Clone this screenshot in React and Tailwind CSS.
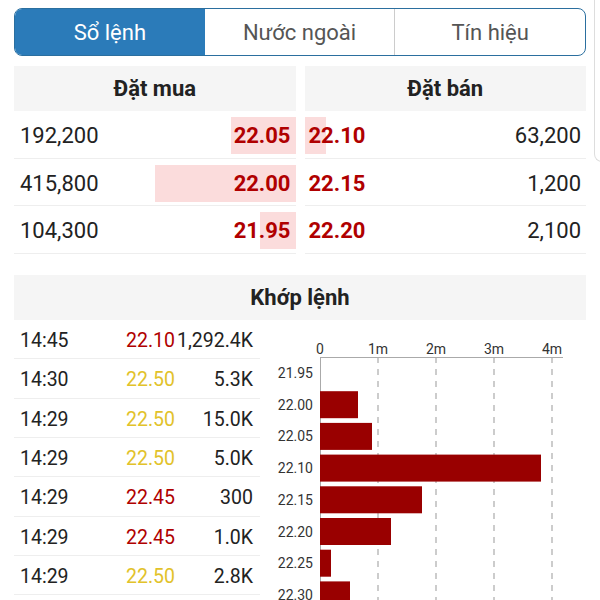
import React from "react";

const buy = [
  { v: "192,200", p: "22.05", w: 65 },
  { v: "415,800", p: "22.00", w: 141 },
  { v: "104,300", p: "21.95", w: 36 },
];
const sell = [
  { v: "63,200", p: "22.10", w: 21 },
  { v: "1,200", p: "22.15", w: 0 },
  { v: "2,100", p: "22.20", w: 0 },
];
const trades = [
  ["14:45", "22.10", "1,292.4K", "r"],
  ["14:30", "22.50", "5.3K", "y"],
  ["14:29", "22.50", "15.0K", "y"],
  ["14:29", "22.50", "5.0K", "y"],
  ["14:29", "22.45", "300", "r"],
  ["14:29", "22.45", "1.0K", "r"],
  ["14:29", "22.50", "2.8K", "y"],
];
const bars = [
  ["21.95", 0],
  ["22.00", 38],
  ["22.05", 52],
  ["22.10", 221],
  ["22.15", 102],
  ["22.20", 71],
  ["22.25", 11],
  ["22.30", 30],
];

function Chart() {
  const x0 = 60;
  const step = 58;
  return (
    <svg width="340" height="280" className="block" style={{ fontFamily: "Roboto, sans-serif" }}>
      {[0, 1, 2, 3, 4].map((i) => (
        <text key={i} x={x0 + i * step} y="34" fontSize="14" fill="#333" textAnchor="middle">
          {i === 0 ? "0" : `${i}m`}
        </text>
      ))}
      {[1, 2, 3, 4].map((i) => (
        <line key={i} x1={x0 + i * step} y1="37" x2={x0 + i * step} y2="280" stroke="#999" strokeWidth="1" strokeDasharray="6 6" />
      ))}
      <line x1={x0} y1="37.5" x2="303" y2="37.5" stroke="#aaa" strokeWidth="1" />
      <line x1={x0 + 0.5} y1="37" x2={x0 + 0.5} y2="280" stroke="#aaa" strokeWidth="1" />
      {bars.map(([l, w], i) => {
        const cy = 53 + i * 31.7;
        return (
          <g key={l}>
            <text x="53" y={cy + 5} fontSize="14" fill="#333" textAnchor="end">
              {l}
            </text>
            {w > 0 && <rect x={x0} y={cy - 13.5} width={w} height="27" fill="#990000" />}
          </g>
        );
      })}
    </svg>
  );
}

export default function App() {
  return (
    <div
      className="relative w-[600px] h-[600px] overflow-hidden bg-white text-[#222]"
      style={{ fontFamily: "Roboto, 'Noto Sans', sans-serif" }}
    >
      {/* tabs */}
      <div className="mx-[14px] mt-[8px] h-[48px] flex rounded-[8px] border border-[#2b6f9f] overflow-hidden text-[22px]">
        <div className="flex-1 flex items-center justify-center bg-[#2b7bb9] text-white">Sổ lệnh</div>
        <div className="flex-1 flex items-center justify-center text-[#555] border-r border-[#ccc]">Nước ngoài</div>
        <div className="flex-1 flex items-center justify-center text-[#555]">Tín hiệu</div>
      </div>

      {/* order book */}
      <div className="mx-[14px] mt-[10px] flex gap-[9px] text-[22px]">
        <div className="flex-1">
          <div className="h-[45px] bg-[#f5f5f5] flex items-center justify-center font-bold">Đặt mua</div>
          {buy.map((r) => (
            <div key={r.p} className="relative h-[47.7px] border-b border-[#eee] flex items-center justify-between pl-[6px] pr-[5px] pt-[2px]">
              <div className="absolute right-0 top-[6px] h-[37px] bg-[#fbdcdc]" style={{ width: r.w }} />
              <span className="relative">{r.v}</span>
              <span className="relative font-bold text-[#b00000]">{r.p}</span>
            </div>
          ))}
        </div>
        <div className="flex-1">
          <div className="h-[45px] bg-[#f5f5f5] flex items-center justify-center font-bold">Đặt bán</div>
          {sell.map((r) => (
            <div key={r.p} className="relative h-[47.7px] border-b border-[#eee] flex items-center justify-between pl-[4px] pr-[5px] pt-[2px]">
              {r.w > 0 && <div className="absolute left-0 top-[6px] h-[37px] bg-[#fbdcdc]" style={{ width: r.w }} />}
              <span className="relative font-bold text-[#b00000]">{r.p}</span>
              <span className="relative">{r.v}</span>
            </div>
          ))}
        </div>
      </div>

      {/* matched */}
      <div className="mx-[14px] mt-[21px] h-[45px] bg-[#f5f5f5] flex items-center justify-center font-bold text-[22px]">
        Khớp lệnh
      </div>
      <div className="flex">
        <div className="ml-[14px] w-[246px] text-[19.5px]">
          {trades.map((t, i) => (
            <div key={i} className="h-[39.3px] border-b border-[#eee] flex items-center pl-[6px] pr-[7px] pt-[3px]">
              <span className="flex-1">{t[0]}</span>
              <span className={`w-[60px] text-right ${t[3] === "r" ? "text-[#b00000]" : "text-[#e2c22a]"}`}>{t[1]}</span>
              <span className="w-[78px] text-right">{t[2]}</span>
            </div>
          ))}
        </div>
        <Chart />
      </div>

      {/* edge overlay */}
      <div className="absolute left-[594px] top-[-10px] w-[20px] h-[172px] border-l border-b border-[#ddd] rounded-bl-[8px]" />
    </div>
  );
}
